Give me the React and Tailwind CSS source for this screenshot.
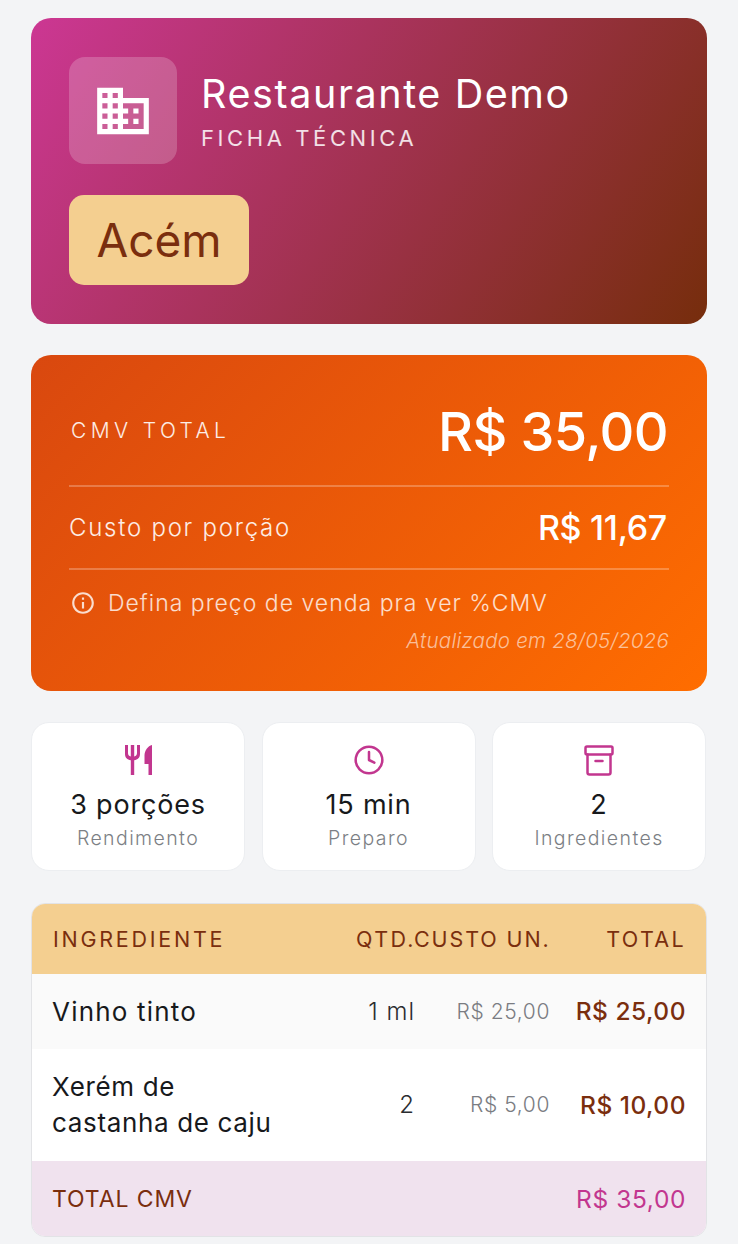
import React from "react";
import { MdDomain, MdInfoOutline } from "react-icons/md";
import { Clock } from "lucide-react";

function ForkKnife() {
  return (
    <svg width="27" height="30" viewBox="0 0 27 30" fill="currentColor">
      <path d="M0 0h3v8c0 1.800.8 3 2.800 3.500V0h3.400v11.500C11.200 11 12 9.800 12 8V0h3v9c0 3.600-2.200 5.800-5.800 6.200V30H5.800V15.200C2.200 14.800 0 12.600 0 9V0z" />
      <path d="M27 0v30h-3.500V19H19.500v-8.500C19.500 5.500 23 1 27 0z" />
    </svg>
  );
}

function Box() {
  return (
    <svg width="30" height="31" viewBox="0 0 30 31" fill="none" stroke="currentColor" strokeWidth="2.5" strokeLinejoin="round" strokeLinecap="round">
      <rect x="1.500" y="1.500" width="27" height="8" rx="1.500" />
      <path d="M3.500 9.500V27.500a2 2 0 0 0 2 2H24.500a2 2 0 0 0 2-2V9.500" />
      <path d="M11.500 16H18.500" />
    </svg>
  );
}

function Stat({ icon, value, label }) {
  return (
    <div className="flex h-[149px] flex-col items-center rounded-[18px] border border-[#eceef1] bg-white pt-[19px]">
      <div className="flex h-[36px] items-center justify-center text-[#c2368f]">{icon}</div>
      <div className="mt-[9px] text-[27px] leading-[36px] tracking-[0.8px] text-[#17191c]">{value}</div>
      <div className="mt-[2px] text-[19.5px] font-light leading-[26px] tracking-[1.4px] text-[#7c7f85]">{label}</div>
    </div>
  );
}

function Row({ name, qty, unit, total, className }) {
  return (
    <div className={`grid grid-cols-[304px_58px_136px_136px] items-center px-[20px] ${className}`}>
      <div className="text-[26px] leading-[36px] text-[#17191c]">{name}</div>
      <div className="-mr-[1px] text-right text-[24px] font-light tracking-[1px] text-[#2a2c30]">{qty}</div>
      <div className="text-right text-[21px] font-light tracking-[0.6px] text-[#7a7c82]">{unit}</div>
      <div className="text-right text-[24.5px] font-medium tracking-[0.5px] text-[#7a2e0e]">{total}</div>
    </div>
  );
}

export default function App() {
  return (
    <div className="flex h-[1244px] flex-col gap-[31px] overflow-hidden bg-[#f3f4f6] px-[31px] pt-[18px] font-['Inter','Open_Sans',sans-serif]">
      <section className="h-[306px] shrink-0 rounded-[20px] bg-[linear-gradient(122deg,#cc3793,#762d0c)] px-[38px] pt-[39px]">
        <div className="flex items-center gap-[24px]">
          <div className="flex h-[107px] w-[108px] items-center justify-center rounded-[16px] bg-white/20 text-white">
            <MdDomain size={62} />
          </div>
          <div>
            <div className="text-[39.5px] font-normal leading-[48px] tracking-[1.6px] text-white">Restaurante Demo</div>
            <div className="mt-[6px] text-[22px] font-normal leading-[28px] tracking-[3.6px] text-white/85">FICHA TÉCNICA</div>
          </div>
        </div>
        <div className="mt-[31px] inline-flex h-[90px] w-[180px] items-center justify-center rounded-[15px] bg-[#f4cf90] text-[46px] text-[#7a2e0e]">
          Acém
        </div>
      </section>

      <section className="h-[336px] shrink-0 rounded-[20px] bg-[linear-gradient(135deg,#d9480f,#ff6d00)] px-[38px] text-white">
        <div className="flex h-[132px] items-center justify-between border-b-2 border-white/25 pt-[22px]">
          <span className="pl-[2px] text-[21px] font-light tracking-[4.4px] text-white/90">CMV TOTAL</span>
          <span className="mr-[1px] text-[54px] font-medium tracking-[-0.6px]">R$ 35,00</span>
        </div>
        <div className="flex h-[83px] items-center justify-between border-b-2 border-white/25">
          <span className="text-[24px] font-light tracking-[1.75px] text-white/90">Custo por porção</span>
          <span className="mr-[2px] text-[34px] font-medium tracking-[-0.3px]">R$ 11,67</span>
        </div>
        <div className="mt-[15px] flex items-center gap-[12px] text-white/80">
          <span className="pl-[1px]"><MdInfoOutline size={26} /></span>
          <span className="text-[23px] font-light leading-[36px] tracking-[1px]">Defina preço de venda pra ver %CMV</span>
        </div>
        <div className="mt-[6px] text-right text-[20.5px] font-light italic leading-[28px] tracking-[0.25px] text-white/60">Atualizado em 28/05/2026</div>
      </section>

      <section className="grid shrink-0 grid-cols-[214px_214px_214px] gap-[16.5px]">
        <Stat icon={<ForkKnife />} value="3 porções" label="Rendimento" />
        <Stat icon={<Clock size={32} strokeWidth={1.9} />} value="15 min" label="Preparo" />
        <Stat icon={<Box />} value="2" label="Ingredientes" />
      </section>

      <section className="mt-[1px] h-[334px] shrink-0 overflow-hidden rounded-[14px] border border-[#e2e3e6] bg-white">
        <div className="grid h-[70px] grid-cols-[304px_58px_136px_136px] items-center bg-[#f4cf90] px-[20px] pt-[1px] text-[21.5px] font-normal tracking-[2.35px] text-[#7a2e0e]">
          <div className="ml-[1px] tracking-[2.75px]">INGREDIENTE</div>
          <div className="whitespace-nowrap text-right">QTD.</div>
          <div className="whitespace-nowrap text-right tracking-[1.9px]">CUSTO UN.</div>
          <div className="text-right">TOTAL</div>
        </div>
        <Row className="h-[75px] bg-[#fafafa]" name={<span className="tracking-[1.2px]">Vinho tinto</span>} qty="1 ml" unit="R$ 25,00" total="R$ 25,00" />
        <Row className="h-[112px] bg-white" name={<span className="tracking-[0.65px]">Xerém de<br />castanha de caju</span>} qty="2" unit="R$ 5,00" total="R$ 10,00" />
        <div className="flex h-[76px] items-center justify-between bg-[#f0e2ee] px-[20px]">
          <span className="text-[23px] font-normal tracking-[0.9px] text-[#7a2e0e]">TOTAL CMV</span>
          <span className="text-[24.5px] font-normal tracking-[0.6px] text-[#c2368f]">R$ 35,00</span>
        </div>
      </section>
    </div>
  );
}
